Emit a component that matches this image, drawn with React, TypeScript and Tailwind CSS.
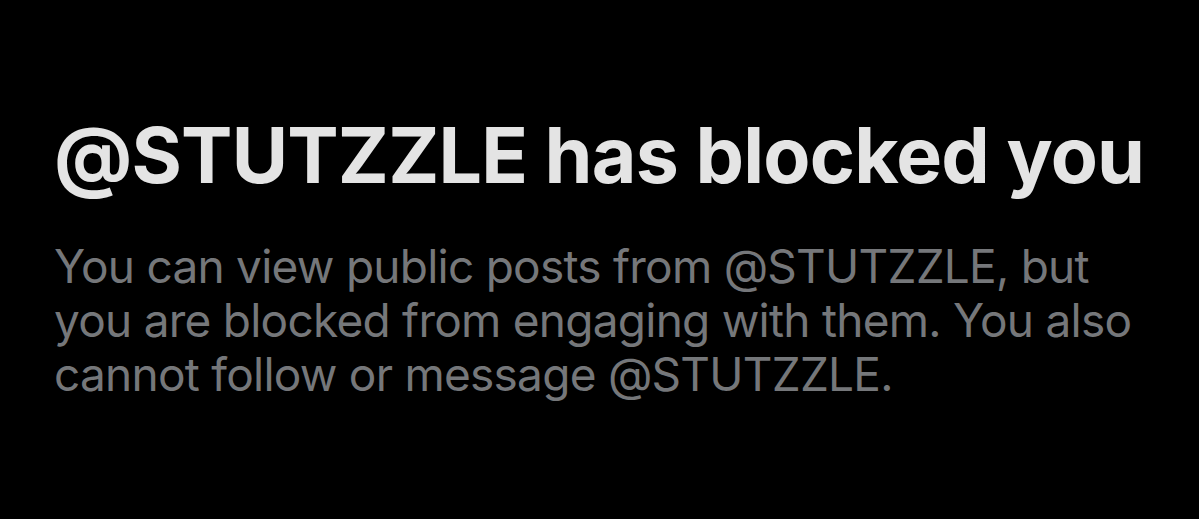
export default function App() {
  const handle = '@STUTZZLE'

  return (
    <div className="w-[1199px] h-[519px] bg-black overflow-hidden font-['Inter',sans-serif]">
      <div className="pl-[54px] pt-[109px] flex flex-col gap-[38px]">
        <h1 className="text-[77px] leading-[92px] font-bold text-[#e4e4e4] tracking-[-0.8px]">
          {handle} has blocked you
        </h1>
        <p className="w-[1100px] text-[46px] leading-[54px] text-[#75777a] tracking-[-0.75px]">
          You can view public posts from {handle}, but you are blocked from
          engaging with them. You also cannot follow or message {handle}.
        </p>
      </div>
    </div>
  )
}
